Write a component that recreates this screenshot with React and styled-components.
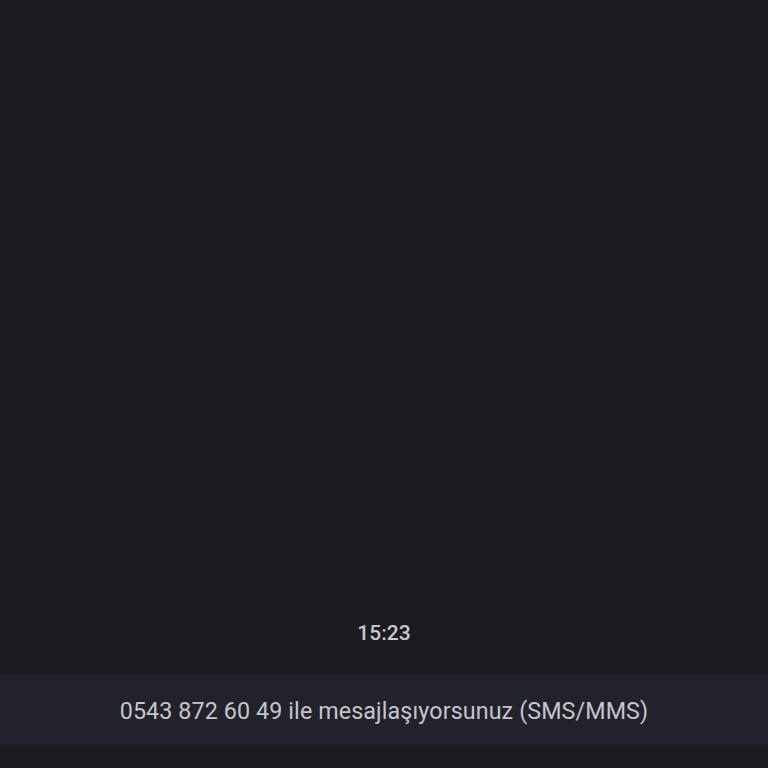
import styled, { createGlobalStyle } from "styled-components";

const Global = createGlobalStyle`
  html, body {
    margin: 0;
    padding: 0;
    background: #1c1b20;
  }
  * { box-sizing: border-box; }
`;

const Screen = styled.div`
  display: flex;
  flex-direction: column;
  height: 768px;
  width: 768px;
  background: #1c1b20;
  font-family: Roboto, "Noto Sans", sans-serif;
`;

const Thread = styled.div`
  flex: 1;
`;

const Stamp = styled.div`
  display: flex;
  justify-content: center;
  padding-bottom: 29px;
  color: #c9c8cf;
  font-size: 21px;
  font-weight: 500;
`;

const Banner = styled.div`
  display: flex;
  justify-content: center;
  align-items: center;
  height: 71px;
  padding-top: 2px;
  background: #22222a;
  color: #c6c5cd;
  font-size: 23.3px;
  letter-spacing: 0.1px;
`;

const Footer = styled.div`
  height: 23px;
  background: #1c1b20;
`;

export default function App() {
  return (
    <>
      <Global />
      <Screen>
        <Thread />
        <Stamp>15:23</Stamp>
        <Banner>0543 872 60 49 ile mesajlaşıyorsunuz (SMS/MMS)</Banner>
        <Footer />
      </Screen>
    </>
  );
}
